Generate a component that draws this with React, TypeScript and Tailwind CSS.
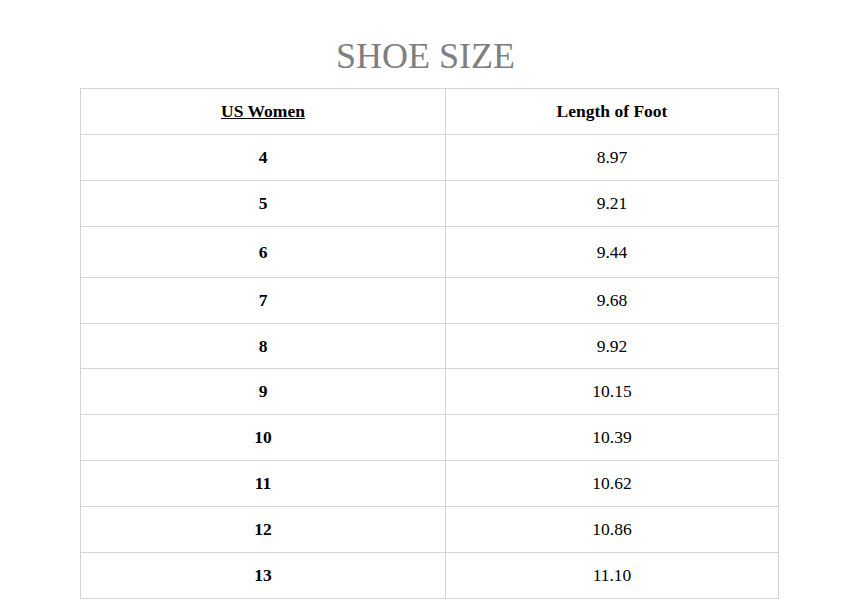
const rows: { size: string; length: string; h: string }[] = [
  { size: '4', length: '8.97', h: 'h-[46px]' },
  { size: '5', length: '9.21', h: 'h-[46px]' },
  { size: '6', length: '9.44', h: 'h-[51px]' },
  { size: '7', length: '9.68', h: 'h-[46px]' },
  { size: '8', length: '9.92', h: 'h-[45px]' },
  { size: '9', length: '10.15', h: 'h-[46px]' },
  { size: '10', length: '10.39', h: 'h-[46px]' },
  { size: '11', length: '10.62', h: 'h-[46px]' },
  { size: '12', length: '10.86', h: 'h-[46px]' },
  { size: '13', length: '11.10', h: 'h-[46px]' },
];

export default function App() {
  return (
    <div className="w-[851px] h-[607px] bg-white pt-[38px] font-[family-name:'Liberation_Serif',serif] text-black">
      <h1 className="text-center text-[36px] leading-[36px] text-[#7f7f7f]">SHOE SIZE</h1>

      {/* Size table */}
      <div className="mt-[14px] ml-[80px] w-[699px] border-t border-l border-[#d4d4d4] text-[17.5px]">
        <div className="flex h-[46px]">
          <div className="w-[365px] flex items-center justify-center border-r border-b border-[#d4d4d4] font-bold underline">
            US Women
          </div>
          <div className="w-[333px] flex items-center justify-center border-r border-b border-[#d4d4d4] font-bold">
            Length of Foot
          </div>
        </div>
        {rows.map(r => (
          <div key={r.size} className={`flex ${r.h}`}>
            <div className="w-[365px] flex items-center justify-center border-r border-b border-[#d4d4d4] font-bold">
              {r.size}
            </div>
            <div className="w-[333px] flex items-center justify-center border-r border-b border-[#d4d4d4]">
              {r.length}
            </div>
          </div>
        ))}
      </div>
    </div>
  );
}
